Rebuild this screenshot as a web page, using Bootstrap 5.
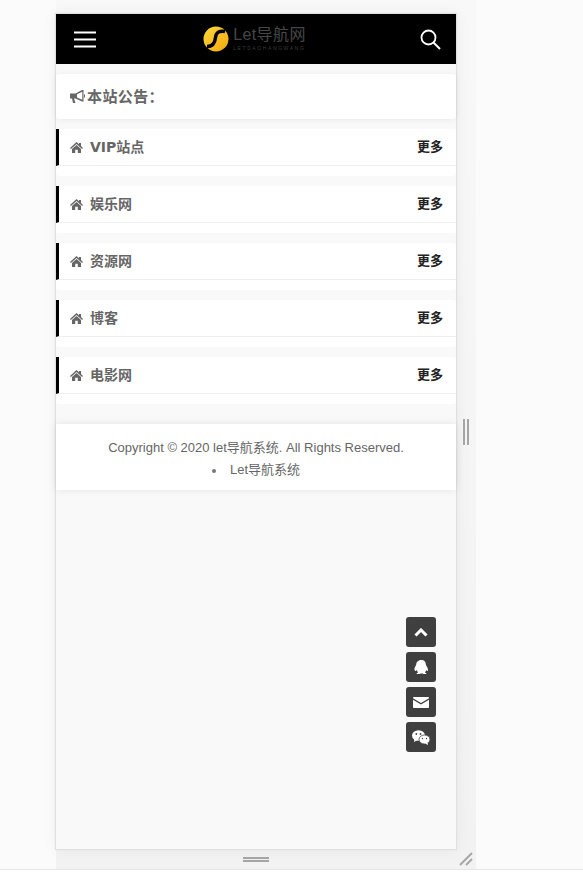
<!DOCTYPE html>
<html lang="zh-CN">
<head>
    <meta charset="UTF-8">
    <meta name="viewport" content="width=device-width, initial-scale=1.0">
    <title>Let导航网</title>
    <link href="https://cdn.jsdelivr.net/npm/bootstrap@5.3.3/dist/css/bootstrap.min.css" rel="stylesheet">
    <style>
        html, body { height: 884px; overflow: hidden; background: #fff; }
        body { font-family: "Liberation Sans", "Noto Sans CJK SC", sans-serif; font-size: 14px; color: #666; }
        .stage { height: 870px; background: #fbfbfb; border-bottom: 1px solid #e6e6e6; position: relative; padding: 14px 0 0 56px; }
        .frame-shade { position: absolute; left: 56px; top: 0; width: 420px; height: 869px; background: linear-gradient(#f8f8f8, #f2f2f2); }
        .phone { position: relative; width: 400px; height: 835px; background: #f9f9f9; box-shadow: 0 0 1px 1px #e0e0e0, 0 0 14px rgba(0, 0, 0, .06); }
        .top-bar { height: 50px; background: #000; padding: 0 15px 0 17px; }
        .logo-wrap { margin-right: 8px; }
        .logo-words { color: #474747; line-height: 1; margin-left: 4px; }
        .logo-main { font-size: 16px; letter-spacing: .4px; }
        .logo-sub { font-size: 5px; letter-spacing: 1.6px; margin-top: 3px; color: #3c3c3c; white-space: nowrap; }
        .notice-box { margin-top: 10px; height: 45px; background: #fff; padding: 0 14px; font-size: 15px; letter-spacing: .4px; font-weight: 700; color: #666; border-radius: 3px; box-shadow: 0 1px 6px rgba(0, 0, 0, .06); }
        .notice-text { margin-left: 2px; padding-top: 1px; }
        .group-box { margin-top: 10px; height: 47px; background: #fff; border-radius: 3px; }
        .group-head { height: 37px; border-bottom: 1px solid #eee; border-left: 3px solid #000; padding: 1px 13px 0 11px; }
        .group-name { color: #666; font-family: "DejaVu Sans", "Noto Sans CJK SC", sans-serif; font-weight: 700; font-size: 14px; margin-left: 7px; }
        .group-more { color: #222; font-weight: 700; font-size: 13px; margin-top: -2px; }
        .foot-box { margin-top: 20px; height: 66px; background: #fff; text-align: center; font-size: 13px; color: #666; padding-top: 13px; line-height: 22px; box-shadow: 0 0 8px rgba(0, 0, 0, .09); }
        .foot-list { list-style: none; margin: 0; padding: 0; }
        .foot-dot { display: inline-block; width: 4px; height: 4px; background: #777; border-radius: 50%; margin-right: 14px; vertical-align: middle; }
        .float-tools { position: absolute; left: 350px; top: 603px; gap: 5px; }
        .float-btn { width: 30px; height: 30px; background: #3f3f3f; border-radius: 3px; }
        .grip-v { position: absolute; left: 463px; top: 419px; width: 6px; height: 26px; border-left: 2px solid #a5a5a5; border-right: 2px solid #a5a5a5; }
        .grip-h { position: absolute; left: 243px; top: 857px; width: 26px; height: 5px; border-top: 2px solid #a5a5a5; border-bottom: 2px solid #a5a5a5; }
        .grip-corner { position: absolute; left: 459px; top: 852px; }
    </style>
</head>
<body>
    <div class="stage">
        <div class="frame-shade"></div>
        <div class="phone">
            <!-- top bar -->
            <div class="top-bar d-flex align-items-center justify-content-between">
                <svg width="24" height="17" viewBox="0 0 24 17"><path d="M1 1.500h22M1 8.500h22M1 15.500h22" stroke="#fff" stroke-width="2"/></svg>
                <div class="logo-wrap d-flex align-items-center">
                    <svg width="26" height="26" viewBox="0 0 26 26">
                        <defs><linearGradient id="gold" x1="0" y1="0" x2="1" y2="1"><stop offset="0" stop-color="#ffd83a"/><stop offset="1" stop-color="#f0a810"/></linearGradient></defs>
                        <circle cx="13" cy="13" r="12.500" fill="url(#gold)"/>
                        <path d="M22 5.500C17 4.500 13 6 12.500 11.500 12 17 9 20.500 4 20.500" fill="none" stroke="#000" stroke-width="3.400"/>
                    </svg>
                    <div class="logo-words">
                        <div class="logo-main">Let导航网</div>
                        <div class="logo-sub">LETDAOHANGWANG</div>
                    </div>
                </div>
                <svg width="21" height="21" viewBox="0 0 21 21"><circle cx="8.500" cy="8.500" r="7" fill="none" stroke="#fff" stroke-width="1.800"/><path d="M13.500 13.500l6.500 6.500" stroke="#fff" stroke-width="2"/></svg>
            </div>

            <!-- notice -->
            <div class="notice-box d-flex align-items-center">
                <svg width="15" height="13" viewBox="0 0 15 13" fill="#666"><path d="M0 3.500h5.500L12 0h1.500v11.500H12L5.500 8.500 4 8.500l1.500 4.500H3L2 8.500H0zM12.300 1.800 7 4.200v3.200l5.300 2.400zM14 4.500h1v3h-1z"/></svg>
                <span class="notice-text">本站公告：</span>
            </div>

            <!-- groups -->
            <div id="groups"></div>

            <!-- footer -->
            <div class="foot-box">
                <div>Copyright © 2020 let导航系统. All Rights Reserved.</div>
                <ul class="foot-list"><li><span class="foot-dot"></span>Let导航系统</li></ul>
            </div>

            <!-- floating tools -->
            <div class="float-tools d-flex flex-column">
                <div class="float-btn d-flex align-items-center justify-content-center">
                    <svg width="14" height="9" viewBox="0 0 14 9"><path d="M1.500 7.500 7 2l5.500 5.500" fill="none" stroke="#fff" stroke-width="3"/></svg>
                </div>
                <div class="float-btn d-flex align-items-center justify-content-center">
                    <svg width="15" height="15" viewBox="0 0 16 16" fill="#fff"><path d="M8 0c3 0 4.500 2 4.600 4.600 0 1 .5 1.400 1 2.300.9 1.300 1.700 3.300 1.100 4.700-.4.700-1.200-.2-1.700-.9-.2 1.100-.7 1.800-1.400 2.500 1 .4 1.900.9 1.600 1.500-.4.500-2.600.5-4.200-.2H7c-1.500.7-3.800.7-4.200.2-.3-.6.600-1.100 1.600-1.500-.7-.7-1.200-1.400-1.400-2.500-.5.700-1.300 1.600-1.700.9C-.3 10.200.5 8.200 1.400 6.900c.5-.9 1-1.300 1-2.300C2.500 2 5 0 8 0z"/></svg>
                </div>
                <div class="float-btn d-flex align-items-center justify-content-center">
                    <svg width="16" height="11" viewBox="0 0 16 11" fill="#fff"><path d="M1 0h14c.6 0 1 .4 1 .8v.4L8 6 0 1.200V.8C0 .4.400 0 1 0zM0 2.800l8 4.800 8-4.800V10c0 .6-.4 1-1 1H1c-.6 0-1-.4-1-1z"/></svg>
                </div>
                <div class="float-btn d-flex align-items-center justify-content-center">
                    <svg width="18" height="15" viewBox="0 0 18 15"><ellipse cx="6.500" cy="5.500" rx="6.500" ry="5.300" fill="#fff"/><path d="M2.500 8.500 2 12l3.500-2z" fill="#fff"/><ellipse cx="12.500" cy="9.500" rx="5.500" ry="4.500" fill="#fff" stroke="#3f3f3f" stroke-width=".8"/><path d="M15.500 12.500l.5 2.500-3-1.500z" fill="#fff"/><circle cx="4.300" cy="4" r=".9" fill="#3f3f3f"/><circle cx="8.500" cy="4" r=".9" fill="#3f3f3f"/><circle cx="10.500" cy="8.500" r=".7" fill="#3f3f3f"/><circle cx="14.500" cy="8.500" r=".7" fill="#3f3f3f"/></svg>
                </div>
            </div>
        </div>
        <div class="grip-v"></div>
        <div class="grip-h"></div>
        <svg class="grip-corner" width="14" height="14" viewBox="0 0 14 14"><path d="M1 13 13 1M7 13l6-6" stroke="#a5a5a5" stroke-width="1.800"/></svg>
    </div>

    <script src="https://cdn.jsdelivr.net/npm/bootstrap@5.3.3/dist/js/bootstrap.bundle.min.js"></script>
    <script>
        const groupNames = ['VIP站点', '娱乐网', '资源网', '博客', '电影网'];
        const homeIcon = '<svg width="13" height="11" viewBox="0 0 13 11" fill="#666"><path d="M6.500 0 9 2.200V1h2v3l2 1.900-.9 1L6.500 2 .9 6.900 0 5.900zM2 7l4.500-3.900L11 7v4H7.800V7.800H5.200V11H2z"/></svg>';
        document.getElementById('groups').innerHTML = groupNames.map(name => `
            <div class="group-box">
                <div class="group-head d-flex align-items-center justify-content-between">
                    <div class="d-flex align-items-center">${homeIcon}<span class="group-name">${name}</span></div>
                    <span class="group-more">更多</span>
                </div>
            </div>`).join('');
    </script>
</body>
</html>
